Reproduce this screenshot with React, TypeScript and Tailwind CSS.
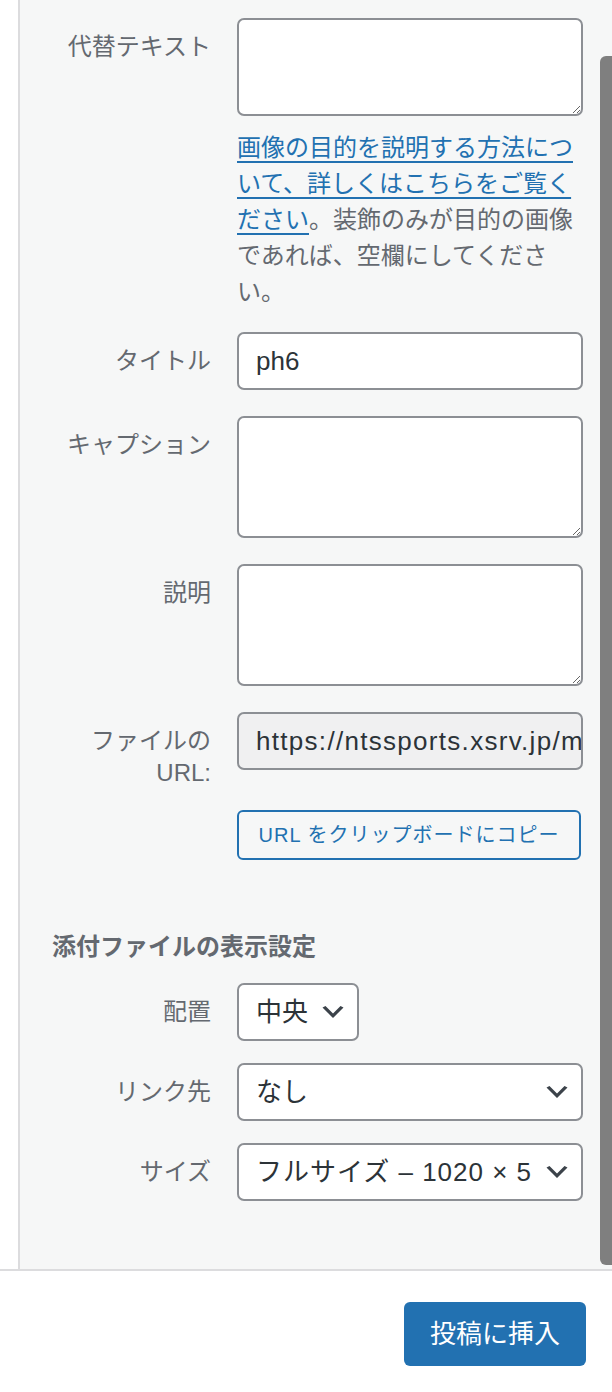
import React from 'react';

const Label: React.FC<{ children: React.ReactNode }> = ({ children }) => (
  <label className="w-[159px] shrink-0 pt-[13px] text-right text-[24px] leading-[32px] text-[#646970]">
    {children}
  </label>
);

const Row: React.FC<{ label: React.ReactNode; className?: string; children: React.ReactNode }> = ({
  label,
  className = '',
  children
}) => (
  <div className={`flex items-start ${className}`}>
    <Label>{label}</Label>
    <div className="ml-[26px] w-[346px]">{children}</div>
  </div>
);

const Chevron = () => (
  <svg viewBox="0 0 20 20" className="h-[30px] w-[30px] shrink-0">
    <path d="M5 6l5 5 5-5 2 1-7 7-7-7 2-1z" fill="#3c434a" />
  </svg>
);

const SelectBox: React.FC<{ value: string; className?: string; textClass?: string }> = ({
  value,
  className = 'w-full',
  textClass = ''
}) => (
  <div
    className={`flex h-[58px] items-center rounded-[7px] border-2 border-[#8c8f94] bg-white pl-[17px] pr-[9px] text-[26px] leading-[32px] text-[#2c3338] ${className}`}
  >
    <span className={`flex-1 overflow-hidden whitespace-nowrap ${textClass}`}>{value}</span>
    <Chevron />
  </div>
);

const textareaClass =
  'block w-full rounded-[7px] border-2 border-[#8c8f94] bg-white px-[17px] py-[8px] text-[26px] text-[#2c3338] outline-none';

export default function App() {
  return (
    <div className="bg-white font-['Liberation_Sans','Noto_Sans_CJK_JP',sans-serif]">
      <div className="relative flex border-b-2 border-[#dcdcde]">
        <div className="w-[18px] shrink-0 bg-white" />
        <div className="flex flex-1 flex-col border-l-2 border-[#dcdcde] bg-[#f6f7f7] pb-[68px] pl-[32px] pt-[18px]">
          <Row label="代替テキスト">
            <textarea className={`${textareaClass} h-[98px]`} />
            <p className="mt-[14px] text-[24px] leading-[36px] text-[#646970]">
              <a href="#" className="text-[#2271b1] underline decoration-[2px] underline-offset-[5px]">
                画像の目的を説明する方法について、詳しくはこちらをご覧ください
              </a>
              。装飾のみが目的の画像であれば、空欄にしてください。
            </p>
          </Row>

          <Row label="タイトル" className="mt-[22px]">
            <input
              readOnly
              value="ph6"
              className="block h-[58px] w-full rounded-[7px] border-2 border-[#8c8f94] bg-white px-[17px] text-[26px] text-[#2c3338] outline-none"
            />
          </Row>

          <Row label="キャプション" className="mt-[26px]">
            <textarea className={`${textareaClass} h-[122px]`} />
          </Row>

          <Row label="説明" className="mt-[26px]">
            <textarea className={`${textareaClass} h-[122px]`} />
          </Row>

          <Row label="ファイルの URL:" className="mt-[26px]">
            <input
              readOnly
              value="https://ntssports.xsrv.jp/media/wp-content/uploads/ph6.jpg"
              className="block h-[58px] w-full rounded-[7px] border-2 border-[#8c8f94] bg-[#f0f0f1] pl-[17px] pr-0 text-[26px] tracking-[1.3px] text-[#2c3338] outline-none"
            />
            <button className="mt-[40px] flex h-[50px] w-[344px] items-center justify-center rounded-[6px] border-2 border-[#2271b1] bg-[#f6f7f7] text-[20px] tracking-[1px] text-[#2271b1]">
              URL をクリップボードにコピー
            </button>
          </Row>

          <h2 className="mt-[71px] text-[24px] font-bold leading-[32px] text-[#646970]">
            添付ファイルの表示設定
          </h2>

          <Row label="配置" className="mt-[20px]">
            <SelectBox value="中央" className="w-[122px]" />
          </Row>

          <Row label="リンク先" className="mt-[22px]">
            <SelectBox value="なし" />
          </Row>

          <Row label="サイズ" className="mt-[22px]">
            <SelectBox value="フルサイズ – 1020 × 5" textClass="tracking-[1px]" />
          </Row>
        </div>
        <div className="absolute bottom-[4px] right-0 top-[56px] w-[12px] rounded-l-[6px] bg-[#7f7f7f]" />
      </div>

      <div className="flex justify-end pb-[26px] pr-[26px] pt-[31px]">
        <button className="h-[64px] w-[182px] rounded-[6px] bg-[#2271b1] text-[26px] text-white">
          投稿に挿入
        </button>
      </div>
    </div>
  );
}
